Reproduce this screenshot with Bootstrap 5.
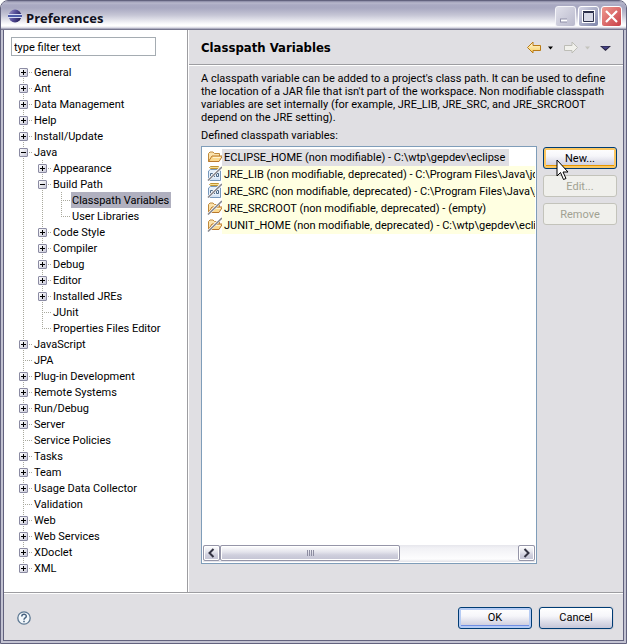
<!DOCTYPE html>
<html lang="en">
<head>
<meta charset="utf-8">
<meta name="viewport" content="width=device-width, initial-scale=1">
<title>Preferences</title>
<link href="https://cdn.jsdelivr.net/npm/bootstrap@5.3.0/dist/css/bootstrap.min.css" rel="stylesheet">
<style>
:root { --face: #e0dfe3; --edge: #62627e; --rule: #9d9da1; }
body { background: #fff; color: #000; font: 11px/13px Roboto, "Liberation Sans", sans-serif; }
svg { display: block; flex: none; }
.window { background: var(--face); border: 1px solid var(--edge); border-radius: 8px 8px 0 0; overflow: hidden; }
.titlebar { height: 29px; flex: none; padding: 2px 4px 0 7px; border-bottom: 1px solid #77778f;
  background: linear-gradient(#8888a4 0, #b8b8cc 2px, #a9a9c2 4px, #a8a8c1 7px, #c5c5d5 14px, #fafafc 23px, #fff 25px, #d0d0dd 27px, #8b8ba2 28px); }
.titlebar h1 { font: bold 13px/16px "Open Sans", "Noto Sans", sans-serif; color: #10101c; }
.frame-inner { border: solid #c3c3d2; border-width: 0 2px 2px; }
.client { border: 1px solid var(--edge); border-top: 0; }
.caption-group { gap: 2px; }
.caption-btn { width: 21px; height: 21px; padding: 0; border: 1px solid #fff; border-radius: 3px; }
.caption-min { background: linear-gradient(135deg, #e0e0ea, #b9b9cc); border-color: #f4f4f8; }
.caption-max { background: linear-gradient(135deg, #d6d6e6, #7e85a9); }
.caption-close { background: linear-gradient(135deg, #ee9a90, #c93f48); }
.caption-btn svg { margin: auto; }

.nav-pane { width: 184px; flex: none; background: #fff; border-right: 1px solid var(--rule); padding: 7px 0 0 7px; }
.filter-box { width: 145px; height: 19px; padding: 1px 2px 0; font-size: 11px; line-height: 16px; border: 1px solid #a5acb2; border-radius: 0; color: #000; background: #fff; }
.tree { margin: 8px 0 0 8px; }
.tree, .tree ul { list-style: none; padding: 0; }
.tree ul { margin: 0 0 0 19px; }
.tree li { background: repeating-linear-gradient(#a9a99d 0 1px, transparent 1px 2px) 4px 0 / 1px 100% no-repeat; }
.tree li:last-child { background-size: 1px 8px; }
.tree > li:first-child { background-position: 4px 8px; }
.tree-row { height: 16px; display: flex; align-items: center;
  background: repeating-linear-gradient(90deg, #a9a99d 0 1px, transparent 1px 2px) 4px 8px / 9px 1px no-repeat; }
.tree-row a { color: #000; text-decoration: none; padding: 2px 2px 0 1px; margin-left: 14px; line-height: 14px; white-space: nowrap; }
.tree-row button + a { margin-left: 5px; }
.tree-row a.active { background: #b0b0bf; }
.twisty { width: 9px; height: 9px; padding: 0; border: 1px solid #8b8ba3; border-radius: 1px; 
  background: linear-gradient(#000, #000) 1px 3px / 5px 1px no-repeat, linear-gradient(135deg, #fff, #c9c9d8); }
.twisty[aria-expanded="false"] { background: linear-gradient(#000, #000) 1px 3px / 5px 1px no-repeat, linear-gradient(#000, #000) 3px 1px / 1px 5px no-repeat, linear-gradient(135deg, #fff, #c9c9d8); }

.page-pane { border-left: 1px solid #fff; min-width: 0; }
.page-head { height: 35px; padding: 2px 12px 0 12px; border-bottom: 1px solid var(--rule); box-shadow: 0 1px #fff; flex: none; }
.page-head h2 { font: bold 13px/16px "DejaVu Sans Condensed", "DejaVu Sans", sans-serif; }
.tool-btn { padding: 0; border: 0; background: none; }
.page-body { padding: 7px 6px 28px 12px; }
.page-intro { margin-bottom: 5px; }
.vars-row { gap: 6px; }
.var-box { border: 1px solid #7f9db9; background: #fff; padding: 2px 1px 1px 1px; }
.var-list li { height: 17px; padding-left: 4px; white-space: nowrap; }
.var-list span { background: #ffffe1; line-height: 17px; padding-left: 2px; margin-left: -1px; flex: 1 0 auto; }
.var-list .current span { background: var(--face); flex: none; padding-right: 4px; }
.scrollbar { height: 17px; background: linear-gradient(#e6e6ec, #f1f1f5 3px, #fdfdfe 14px, #e2e2e8); }
.scroll-piece { height: 16px; padding: 0; border: 1px solid #9595a8; border-radius: 2px; box-shadow: inset 0 0 0 1px #fff;
  background: linear-gradient(#fff, #e4e4ec 6px, #cfcfdd 9px, #c3c3d3); }
.scroll-piece svg { margin: auto; }
.scroll-end { width: 17px; }
.scroll-thumb { width: 180px; }
.side-buttons { width: 74px; gap: 6px; flex: none; padding-top: 1px; }
.xp-btn { width: 74px; height: 22px; padding: 1px 0 0; font-size: 11px; line-height: 16px; color: #000; border: 1px solid #003c74; border-radius: 3px;
  background: linear-gradient(#fff, #f6f6fa 8px, #dcdce8 14px, #c6c6d8); box-shadow: 0 0 0 1px #d3d3da; }
.xp-btn:disabled { color: #a1a192; border-color: #c3c3bb; background: #f0f0ec; opacity: 1; box-shadow: none; }
.xp-hot { box-shadow: inset 0 0 0 2px #fbc761, inset 0 -3px #e59700; }
.xp-default { box-shadow: inset 0 0 0 2px #b5cbf4, inset 0 -3px #6f8ee5; }
.pointer { position: absolute; left: 13px; top: 12px; }
.footer-bar { height: 48px; flex: none; padding: 2px 10px 0 13px; border-top: 1px solid var(--rule); box-shadow: inset 0 1px #fff; }
.footer-btns { gap: 7px; }
</style>
</head>
<body>
<svg width="0" height="0" class="position-absolute" aria-hidden="true">
  <symbol id="folder" viewBox="0 0 16 16">
    <path d="M1.500 12.500V4.500L3 3h3l1.500 1.500H12.500V7" fill="#fbe3ad" stroke="#c08a3c"/>
    <path d="M1.500 12.500L5 7h10.500L12 12.500z" fill="#fbd98f" stroke="#b9782c"/>
    <path d="M6 8.500h7.500" stroke="#fff3d0"/>
  </symbol>
  <symbol id="jar" viewBox="0 0 16 16">
    <path d="M3.500 3.500L1.500 5v9.500h12V5l-2-1.500z" fill="#e4effb" stroke="#7898bb"/>
    <path d="M3.500 .500h8l1 1-1 1h-8l-1-1z" fill="#f5df94" stroke="#c09435"/>
    <path d="M3.500 7.500h2v3h-2zM7.500 7v4M9.500 7.500h2v3h-2z" fill="none" stroke="#4a6785"/>
    <path d="M3 13h9" stroke="#c4d8ee"/>
  </symbol>
  <symbol id="slash" viewBox="0 0 16 16">
    <path d="M1 14.500L14.500 1" stroke="#fff" stroke-width="2.500"/>
    <path d="M1 14.500L15 1" stroke="#85858c" stroke-width="1.600"/>
  </symbol>
</svg>

<div class="window d-flex flex-column min-vh-100">
  <header class="titlebar d-flex align-items-center">
    <svg width="14" height="14" viewBox="0 0 14 14" aria-hidden="true">
      <defs><linearGradient id="ball" x2="1" y2="0.400"><stop stop-color="#a39bc9"/><stop offset=".5" stop-color="#5a529c"/><stop offset="1" stop-color="#2c2562"/></linearGradient></defs>
      <circle cx="7" cy="7" r="6.500" fill="url(#ball)"/>
      <path d="M0 5.500h14M0 8.500h14" stroke="#d9dcf4"/><path d="M0 7h14" stroke="#4c5aa8" stroke-width="2"/>
    </svg>
    <h1 class="mb-0 ms-1 pt-1 flex-grow-1">Preferences</h1>
    <div class="caption-group d-flex">
      <button type="button" class="caption-btn caption-min" aria-label="Minimize"><svg width="17" height="17"><path d="M3 12.500h7" stroke="#8f8fa8" stroke-width="4"/><path d="M4 12.500h6" stroke="#fff" stroke-width="2"/></svg></button>
      <button type="button" class="caption-btn caption-max" aria-label="Maximize"><svg width="17" height="17"><path d="M3.500 3.500h10v10h-10z" fill="none" stroke="#fff" stroke-width="3"/><path d="M3.500 4.500h10v9h-10zM3 3.500h11" fill="#d7d9e6" stroke="#2b2f4a"/></svg></button>
      <button type="button" class="caption-btn caption-close" aria-label="Close"><svg width="17" height="17"><path d="M3 3l11 11M14 3L3 14" stroke="#fff" stroke-width="2.200"/></svg></button>
    </div>
  </header>

  <div class="frame-inner flex-grow-1 d-flex flex-column">
  <div class="client flex-grow-1 d-flex flex-column">
    <main class="d-flex flex-grow-1">
      <nav class="nav-pane" aria-label="Preference pages">
        <input class="filter-box form-control" type="text" value="type filter text" aria-label="Filter">
        <ul class="tree mb-0">
          <li><div class="tree-row"><button class="twisty" aria-expanded="false" aria-label="Expand General"></button><a href="#">General</a></div></li>
          <li><div class="tree-row"><button class="twisty" aria-expanded="false" aria-label="Expand Ant"></button><a href="#">Ant</a></div></li>
          <li><div class="tree-row"><button class="twisty" aria-expanded="false" aria-label="Expand Data Management"></button><a href="#">Data Management</a></div></li>
          <li><div class="tree-row"><button class="twisty" aria-expanded="false" aria-label="Expand Help"></button><a href="#">Help</a></div></li>
          <li><div class="tree-row"><button class="twisty" aria-expanded="false" aria-label="Expand Install/Update"></button><a href="#">Install/Update</a></div></li>
          <li><div class="tree-row"><button class="twisty" aria-expanded="true" aria-label="Collapse Java"></button><a href="#">Java</a></div>
            <ul>
              <li><div class="tree-row"><button class="twisty" aria-expanded="false" aria-label="Expand Appearance"></button><a href="#">Appearance</a></div></li>
              <li><div class="tree-row"><button class="twisty" aria-expanded="true" aria-label="Collapse Build Path"></button><a href="#">Build Path</a></div>
                <ul>
                  <li><div class="tree-row"><a href="#" class="active" aria-current="page">Classpath Variables</a></div></li>
                  <li><div class="tree-row"><a href="#">User Libraries</a></div></li>
                </ul>
              </li>
              <li><div class="tree-row"><button class="twisty" aria-expanded="false" aria-label="Expand Code Style"></button><a href="#">Code Style</a></div></li>
              <li><div class="tree-row"><button class="twisty" aria-expanded="false" aria-label="Expand Compiler"></button><a href="#">Compiler</a></div></li>
              <li><div class="tree-row"><button class="twisty" aria-expanded="false" aria-label="Expand Debug"></button><a href="#">Debug</a></div></li>
              <li><div class="tree-row"><button class="twisty" aria-expanded="false" aria-label="Expand Editor"></button><a href="#">Editor</a></div></li>
              <li><div class="tree-row"><button class="twisty" aria-expanded="false" aria-label="Expand Installed JREs"></button><a href="#">Installed JREs</a></div></li>
              <li><div class="tree-row"><a href="#">JUnit</a></div></li>
              <li><div class="tree-row"><a href="#">Properties Files Editor</a></div></li>
            </ul>
          </li>
          <li><div class="tree-row"><button class="twisty" aria-expanded="false" aria-label="Expand JavaScript"></button><a href="#">JavaScript</a></div></li>
          <li><div class="tree-row"><a href="#">JPA</a></div></li>
          <li><div class="tree-row"><button class="twisty" aria-expanded="false" aria-label="Expand Plug-in Development"></button><a href="#">Plug-in Development</a></div></li>
          <li><div class="tree-row"><button class="twisty" aria-expanded="false" aria-label="Expand Remote Systems"></button><a href="#">Remote Systems</a></div></li>
          <li><div class="tree-row"><button class="twisty" aria-expanded="false" aria-label="Expand Run/Debug"></button><a href="#">Run/Debug</a></div></li>
          <li><div class="tree-row"><button class="twisty" aria-expanded="false" aria-label="Expand Server"></button><a href="#">Server</a></div></li>
          <li><div class="tree-row"><a href="#">Service Policies</a></div></li>
          <li><div class="tree-row"><button class="twisty" aria-expanded="false" aria-label="Expand Tasks"></button><a href="#">Tasks</a></div></li>
          <li><div class="tree-row"><button class="twisty" aria-expanded="false" aria-label="Expand Team"></button><a href="#">Team</a></div></li>
          <li><div class="tree-row"><button class="twisty" aria-expanded="false" aria-label="Expand Usage Data Collector"></button><a href="#">Usage Data Collector</a></div></li>
          <li><div class="tree-row"><a href="#">Validation</a></div></li>
          <li><div class="tree-row"><button class="twisty" aria-expanded="false" aria-label="Expand Web"></button><a href="#">Web</a></div></li>
          <li><div class="tree-row"><button class="twisty" aria-expanded="false" aria-label="Expand Web Services"></button><a href="#">Web Services</a></div></li>
          <li><div class="tree-row"><button class="twisty" aria-expanded="false" aria-label="Expand XDoclet"></button><a href="#">XDoclet</a></div></li>
          <li><div class="tree-row"><button class="twisty" aria-expanded="false" aria-label="Expand XML"></button><a href="#">XML</a></div></li>
        </ul>
      </nav>

      <section class="page-pane flex-grow-1 d-flex flex-column">
        <div class="page-head d-flex align-items-center">
          <h2 class="mb-0 flex-grow-1">Classpath Variables</h2>
          <button class="tool-btn" aria-label="Back"><svg width="16" height="14"><defs><linearGradient id="gold" x2="0" y2="1"><stop stop-color="#fffbe0"/><stop offset="1" stop-color="#f8cc5c"/></linearGradient></defs><path d="M1.500 6.500L7 1v3.500h7.500v5H7V12z" fill="url(#gold)" stroke="#b97a16"/></svg></button>
          <button class="tool-btn ms-1" aria-label="Back history"><svg width="9" height="14"><path d="M2 5.500h5L4.500 8.500z"/></svg></button>
          <button class="tool-btn ms-2" aria-label="Forward"><svg width="16" height="14"><path d="M14.500 6.500L9 1v3.500H1.500v5H9V12z" fill="#f1f1ec" stroke="#bdbdb6"/></svg></button>
          <button class="tool-btn ms-1" aria-label="Forward history"><svg width="9" height="14"><path d="M2 5.500h5L4.500 8.500z" fill="#c4c4bd"/></svg></button>
          <button class="tool-btn ms-2" aria-label="Menu"><svg width="11" height="14"><path d="M0 5h11L5.500 10z" fill="#26233c"/><path d="M1.500 5.500h8L5.500 8.500z" fill="#454286"/></svg></button>
        </div>
        <div class="page-body flex-grow-1 d-flex flex-column">
          <p class="page-intro text-nowrap">A classpath variable can be added to a project's class path. It can be used to define<br>the location of a JAR file that isn't part of the workspace. Non modifiable classpath<br>variables are set internally (for example, JRE_LIB, JRE_SRC, and JRE_SRCROOT<br>depend on the JRE setting).</p>
          <div class="mb-1" id="vars-label">Defined classpath variables:</div>
          <div class="vars-row d-flex flex-grow-1">
            <div class="var-box flex-grow-1 d-flex flex-column overflow-hidden">
              <ul class="var-list list-unstyled mb-0 flex-grow-1 overflow-hidden" aria-labelledby="vars-label">
                <li class="current d-flex"><svg width="16" height="16"><use href="#folder"/></svg><span>ECLIPSE_HOME (non modifiable) - C:\wtp\gepdev\eclipse</span></li>
                <li class="d-flex"><svg width="16" height="16"><use href="#jar"/><use href="#slash"/></svg><span>JRE_LIB (non modifiable, deprecated) - C:\Program Files\Java\jd</span></li>
                <li class="d-flex"><svg width="16" height="16"><use href="#jar"/><use href="#slash"/></svg><span>JRE_SRC (non modifiable, deprecated) - C:\Program Files\Java\jd</span></li>
                <li class="d-flex"><svg width="16" height="16"><use href="#folder"/><use href="#slash"/></svg><span>JRE_SRCROOT (non modifiable, deprecated) - (empty)</span></li>
                <li class="d-flex"><svg width="16" height="16"><use href="#folder"/><use href="#slash"/></svg><span>JUNIT_HOME (non modifiable, deprecated) - C:\wtp\gepdev\eclip</span></li>
              </ul>
              <div class="scrollbar d-flex">
                <button class="scroll-piece scroll-end" aria-label="Scroll left"><svg width="9" height="10"><path d="M6.500 1L2.500 5l4 4" fill="none" stroke="#333342" stroke-width="2"/></svg></button>
                <button class="scroll-piece scroll-thumb" aria-label="Scroll position"><svg width="9" height="7"><path d="M1.500 0v6M3.500 0v6M5.500 0v6M7.500 0v6" stroke="#8d8da1"/></svg></button>
                <button class="scroll-piece scroll-end ms-auto" aria-label="Scroll right"><svg width="9" height="10"><path d="M2.500 1l4 4-4 4" fill="none" stroke="#333342" stroke-width="2"/></svg></button>
              </div>
            </div>
            <div class="side-buttons d-flex flex-column">
              <div class="position-relative">
                <button class="xp-btn xp-hot d-block">New...</button>
                <svg class="pointer" width="14" height="22" viewBox="0 0 14 22" aria-hidden="true"><path d="M1 1v16l3.500-3.500 3 7 2.500-1-3-6.500h5z" fill="#fff" stroke="#000"/></svg>
              </div>
              <button class="xp-btn" disabled>Edit...</button>
              <button class="xp-btn" disabled>Remove</button>
            </div>
          </div>
        </div>
      </section>
    </main>
    <footer class="footer-bar d-flex align-items-center">
      <button class="tool-btn me-auto" aria-label="Help"><svg width="14" height="14"><circle cx="7" cy="7" r="6.200" fill="#f2f7fb" stroke="#5d7893" stroke-width="1.300"/><path d="M4.800 5.500c0-3 4.500-2.800 4.500-.3C9.300 7 7 6.800 7 8.700M7 9.800v1.500" fill="none" stroke="#46617f" stroke-width="1.500"/></svg></button>
      <div class="footer-btns d-flex">
        <button class="xp-btn xp-default">OK</button>
        <button class="xp-btn">Cancel</button>
      </div>
    </footer>
  </div>
  </div>
</div>
<script src="https://cdn.jsdelivr.net/npm/bootstrap@5.3.0/dist/js/bootstrap.bundle.min.js"></script>
</body>
</html>
